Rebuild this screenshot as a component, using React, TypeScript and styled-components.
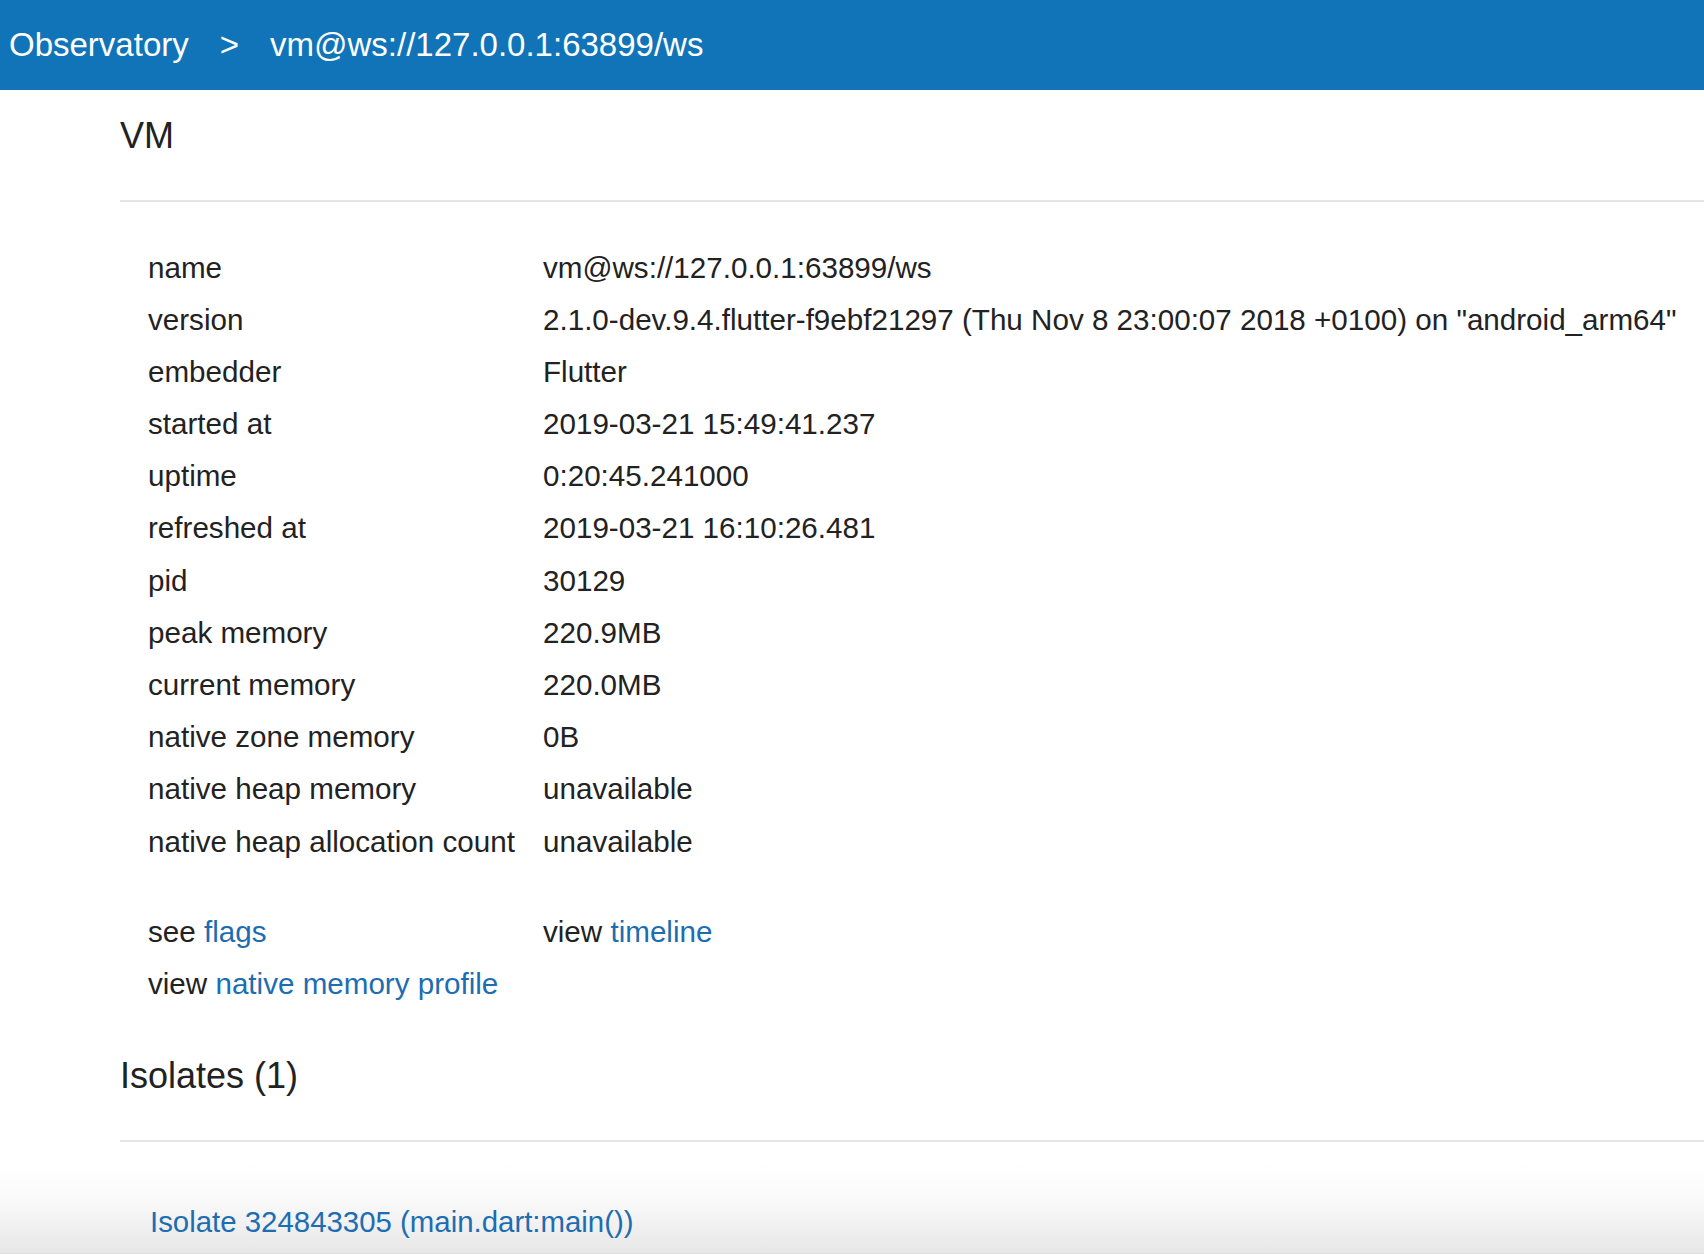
import React from "react";
import styled, { createGlobalStyle } from "styled-components";

const GlobalStyle = createGlobalStyle`
  html, body {
    margin: 0;
    padding: 0;
    background: #ffffff;
  }
  body {
    font-family: "Liberation Sans", Arial, Helvetica, sans-serif;
    color: #222222;
    overflow: hidden;
  }
`;

const Page = styled.div`
  width: 100%;
  min-height: 1254px;
  display: flex;
  flex-direction: column;
`;

const NavBar = styled.nav`
  height: 90px;
  background: #1174b8;
  display: flex;
  align-items: center;
  padding-left: 9px;
  gap: 31px;
  color: #ffffff;
  font-size: 33px;
`;

const NavItem = styled.span`
  white-space: nowrap;
  line-height: 90px;
`;

const Content = styled.main`
  padding-left: 120px;
  display: flex;
  flex-direction: column;
`;

const Heading = styled.h1<{ $top: number }>`
  margin: ${(p) => p.$top}px 0 0 0;
  font-size: 36px;
  line-height: 43.2px;
  font-weight: normal;
  color: #222222;
`;

const Rule = styled.hr`
  margin: 42.5px 0 0 0;
  border: none;
  height: 2px;
  background: #e6e6e6;
`;

const MemberGrid = styled.div<{ $top: number }>`
  margin-top: ${(p) => p.$top}px;
  padding-left: 28px;
  display: grid;
  grid-template-columns: 395px auto;
  grid-auto-rows: 52.2px;
  align-items: center;
  font-size: 29.6px;
  line-height: 34.56px;
`;

const Cell = styled.div`
  white-space: nowrap;
`;

const Link = styled.a`
  color: #1d6db2;
  text-decoration: none;
  cursor: pointer;
`;

const IsolateItem = styled.div`
  margin-top: 21px;
  flex: 1;
  padding: 42px 0 0 150px;
  font-size: 29.4px;
  line-height: 34.56px;
  background: linear-gradient(to bottom, #ffffff 0%, #fafafa 40%, #e7e7e7 100%);
  border-bottom: 1px solid #dddddd;
`;

const rows: [string, string][] = [
  ["name", "vm@ws://127.0.0.1:63899/ws"],
  [
    "version",
    '2.1.0-dev.9.4.flutter-f9ebf21297 (Thu Nov 8 23:00:07 2018 +0100) on "android_arm64"',
  ],
  ["embedder", "Flutter"],
  ["started at", "2019-03-21 15:49:41.237"],
  ["uptime", "0:20:45.241000"],
  ["refreshed at", "2019-03-21 16:10:26.481"],
  ["pid", "30129"],
  ["peak memory", "220.9MB"],
  ["current memory", "220.0MB"],
  ["native zone memory", "0B"],
  ["native heap memory", "unavailable"],
  ["native heap allocation count", "unavailable"],
];

export default function App() {
  return (
    <>
      <GlobalStyle />
      <Page>
        <NavBar>
          <NavItem>Observatory</NavItem>
          <NavItem>&gt;</NavItem>
          <NavItem>vm@ws://127.0.0.1:63899/ws</NavItem>
        </NavBar>
        <Content>
          <Heading $top={24}>VM</Heading>
          <Rule />
          <MemberGrid $top={40}>
            {rows.map(([k, v]) => (
              <React.Fragment key={k}>
                <Cell>{k}</Cell>
                <Cell>{v}</Cell>
              </React.Fragment>
            ))}
          </MemberGrid>
          <MemberGrid $top={38.5}>
            <Cell>
              see <Link>flags</Link>
            </Cell>
            <Cell>
              view <Link>timeline</Link>
            </Cell>
            <Cell>
              view <Link>native memory profile</Link>
            </Cell>
          </MemberGrid>
          <Heading $top={43}>Isolates (1)</Heading>
          <Rule />
        </Content>
        <IsolateItem>
          <Link>Isolate 324843305 (main.dart:main())</Link>
        </IsolateItem>
      </Page>
    </>
  );
}
